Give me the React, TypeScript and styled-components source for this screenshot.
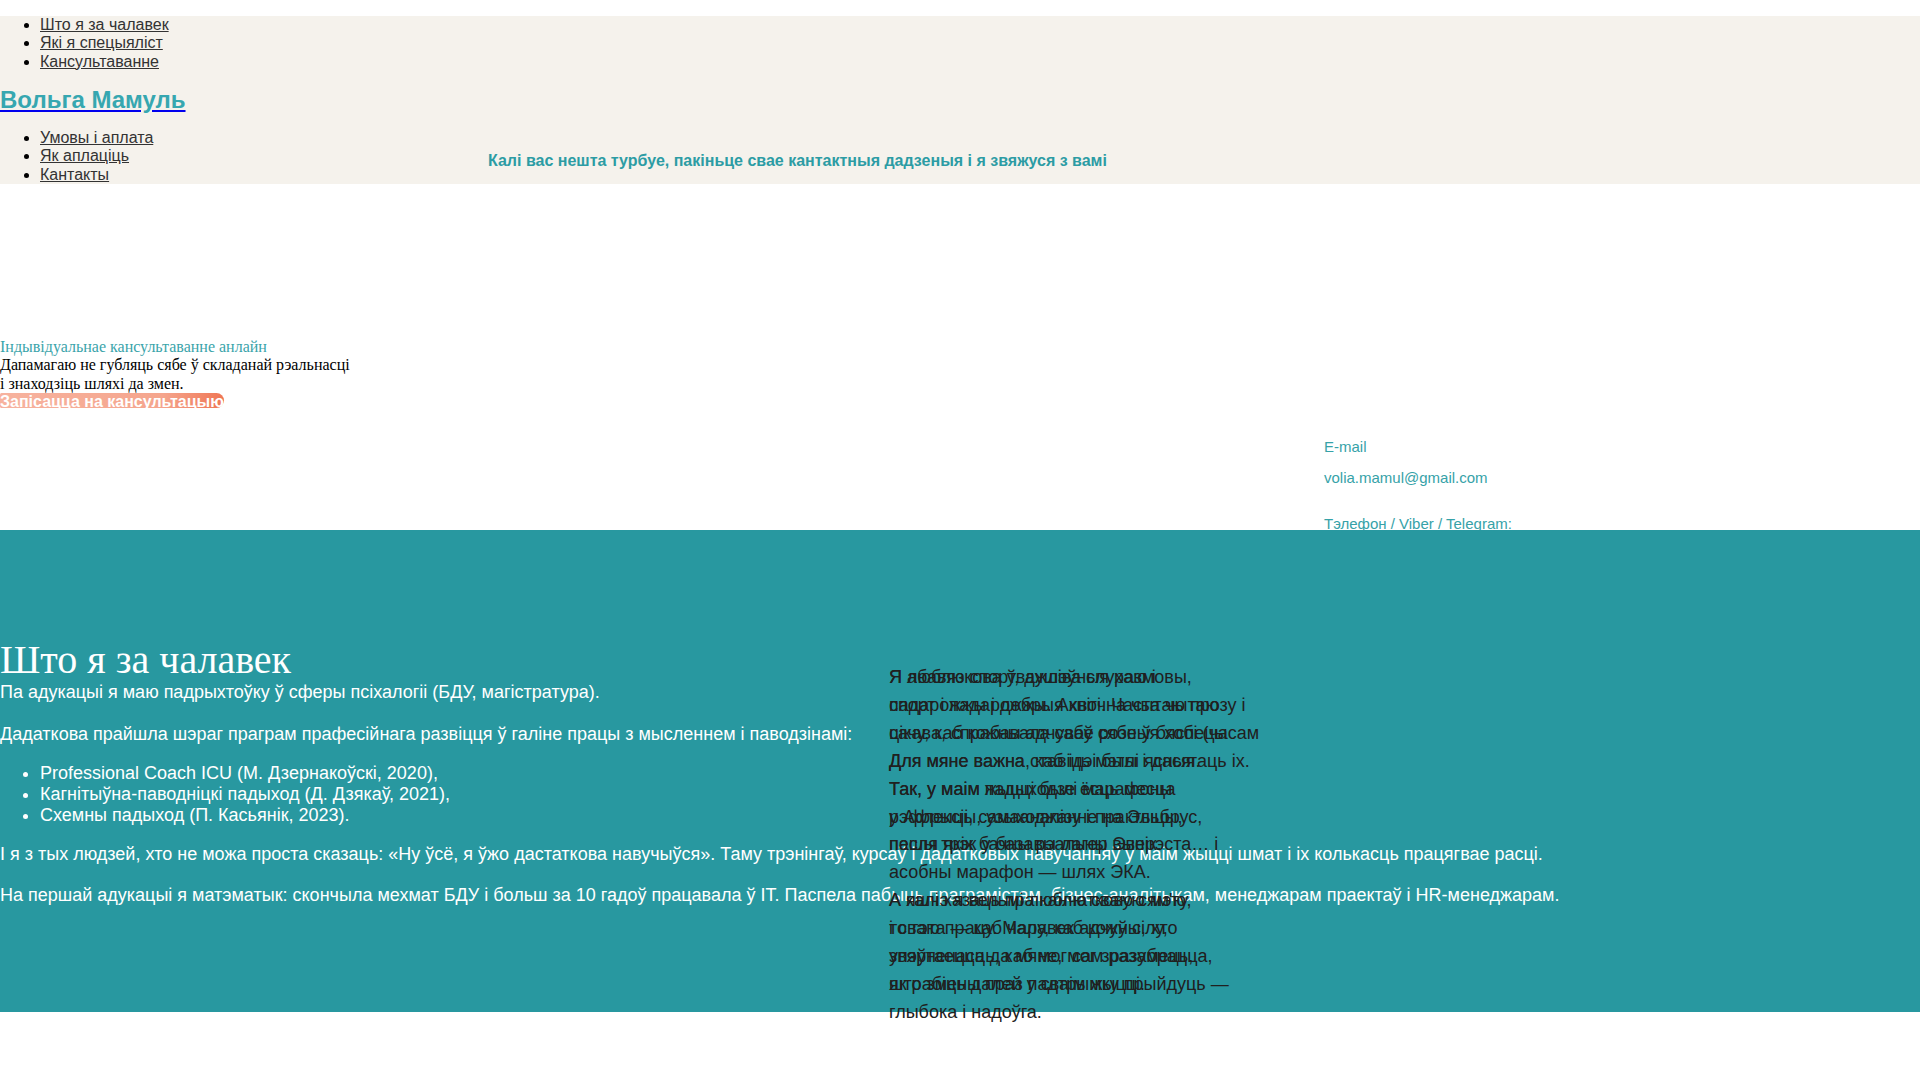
import React from "react";
import styled, { createGlobalStyle } from "styled-components";

const GlobalStyle = createGlobalStyle`
  html, body {
    margin: 0;
    padding: 0;
    background: #ffffff;
  }
  body {
    font-family: "Liberation Sans", Arial, sans-serif;
    font-size: 16px;
    color: #000;
  }
`;

const Header = styled.header`
  margin-top: 16px;
  background: #f5f2ec;
`;

const NavList = styled.ul<{ $top?: number; $bottom?: number }>`
  margin: ${(p) => p.$top ?? 0}px 0 ${(p) => p.$bottom ?? 0}px;
  padding: 0 0 0 40px;
  list-style: disc;
`;

const NavItem = styled.li`
  font-size: 16px;
  line-height: 18.4px;
`;

const NavLink = styled.a`
  color: #333333;
  text-decoration: underline;
`;

const SiteTitle = styled.h1`
  margin: 0;
  font-size: 24px;
  line-height: 27.6px;
  font-weight: 700;
`;

const TitleLink = styled.a`
  color: #36a7b0;
  text-decoration: underline;
  text-decoration-color: #0000ee;
`;

const HeaderRow = styled.div`
  display: flex;
`;

const SubNavWrap = styled.div`
  flex: 0 0 488px;
`;

const HeaderNote = styled.p`
  align-self: flex-end;
  margin: 0 0 14px;
  font-size: 16px;
  line-height: 18.4px;
  font-weight: 700;
  color: #2c9ca4;
`;

const Hero = styled.section`
  display: flex;
  height: 346px;
`;

const HeroMain = styled.div`
  flex: 0 0 1324px;
  padding-top: 154px;
  box-sizing: border-box;
  font-family: "Liberation Serif", "Times New Roman", serif;
  font-size: 16px;
  line-height: 18.4px;
`;

const Tagline = styled.div`
  color: #3aa4aa;
`;

const HeroText = styled.div`
  color: #000;
`;

const CtaButton = styled.a`
  display: inline-block;
  height: 15px;
  line-height: 17px;
  padding: 0;
  border-radius: 2px 10px 10px 2px;
  background: linear-gradient(100deg, #f7b39f 0%, #f5a58d 72%, #ef7452 100%);
  font-family: "Liberation Sans", Arial, sans-serif;
  font-weight: 700;
  font-size: 16px;
  color: #ffffff;
  text-decoration: underline;
  vertical-align: top;
`;

const Contacts = styled.div`
  padding-top: 254px;
  font-size: 15px;
  line-height: 17.25px;
  color: #36a2a8;
`;

const ContactLine = styled.p<{ $gap: number }>`
  margin: ${(p) => p.$gap}px 0 0;
`;

const About = styled.section`
  position: relative;
  background: #2898a0;
  padding: 109px 0 87px;
  color: #ffffff;
  font-size: 18px;
`;

const AboutTitle = styled.h2`
  margin: 0;
  font-family: "Liberation Serif", "Times New Roman", serif;
  font-weight: 400;
  font-size: 40px;
  line-height: 41px;
`;

const AboutText = styled.p`
  margin: 16px 0;
  line-height: 25.6px;
  &:first-of-type {
    margin-top: 0;
  }
`;

const AboutList = styled.ul`
  margin: 16px 0;
  padding-left: 40px;
`;

const AboutItem = styled.li`
  line-height: 20.8px;
`;

const Slides = styled.div`
  position: absolute;
  left: 889px;
  top: 134px;
  width: 360px;
  z-index: 1;
`;

const Slide = styled.p`
  position: absolute;
  top: 0;
  left: 0;
  margin: 0;
  white-space: nowrap;
  font-size: 18px;
  line-height: 27.9px;
  color: #202020;
`;

const NextSection = styled.section`
  height: 240px;
  background: #ffffff;
`;

const slideA = [
  "Я люблю спорт, душэўныя размовы,",
  "падарожжы і добрыя кнігі. Часта чытаю",
  "цікава, спрабавала сабе розныя хобі (часам",
  "Для мяне важна ставіць мэты і дасягаць іх.",
  "Так, у маім жыцці былі марафоны",
  "у Афрыцы, узыходжанне на Эльбрус,",
  "пешы трэк у базавы лагер Эверэста… і",
  "асобны марафон — шлях ЭКА.",
  "А яшчэ я вельмі люблю сваю сям'ю",
  "і сваю працу. Мару, каб кожны, хто",
  "звяртаецца да мяне, мог зразумець,",
  "што змены праз падтрымку прыйдуць —",
  "глыбока і надоўга.",
];

const slideB = [
  "Я абавязкова ўважліва слухаю і",
  "спорт і падарожжы. Ахвочна чытаю прозу і",
  "сачу, каб кожны адчуваў сябе ў бяспецы",
  "Для мяне важна, каб ідэі былі ясныя.",
  "Так, у маім падыходзе ёсць месца",
  "рэфлексіі, самааналізу і практыцы,",
  "пасля якіх бачны рэальны вынік.",
  "",
  "А калі казаць пра канчатковую мэту,",
  "то гэта — каб чалавек адчуў сілу,",
  "упэўненасць, каб мог сам разабрацца,",
  "як рабіць далей у сваім жыцці.",
];

const renderLines = (lines: string[]) =>
  lines.map((line, i) => (
    <React.Fragment key={i}>
      {line}
      {i < lines.length - 1 && <br />}
    </React.Fragment>
  ));

export default function App() {
  return (
    <>
      <GlobalStyle />
      <Header>
        <NavList $bottom={15}>
          <NavItem>
            <NavLink href="#about">Што я за чалавек</NavLink>
          </NavItem>
          <NavItem>
            <NavLink href="#specialist">Які я спецыяліст</NavLink>
          </NavItem>
          <NavItem>
            <NavLink href="#consult">Кансультаванне</NavLink>
          </NavItem>
        </NavList>
        <SiteTitle>
          <TitleLink href="#">Вольга Мамуль</TitleLink>
        </SiteTitle>
        <HeaderRow>
          <SubNavWrap>
            <NavList $top={15}>
              <NavItem>
                <NavLink href="#terms">Умовы і аплата</NavLink>
              </NavItem>
              <NavItem>
                <NavLink href="#pay">Як аплаціць</NavLink>
              </NavItem>
              <NavItem>
                <NavLink href="#contacts">Кантакты</NavLink>
              </NavItem>
            </NavList>
          </SubNavWrap>
          <HeaderNote>
            Калі вас нешта турбуе, пакіньце свае кантактныя дадзеныя і я звяжуся з вамі
          </HeaderNote>
        </HeaderRow>
      </Header>

      <Hero>
        <HeroMain>
          <Tagline>Індывідуальнае кансультаванне анлайн</Tagline>
          <HeroText>
            Дапамагаю не губляць сябе ў складанай рэальнасці
            <br />
            і знаходзіць шляхі да змен.
          </HeroText>
          <CtaButton href="#consult">Запісацца на кансультацыю</CtaButton>
        </HeroMain>
        <Contacts>
          <ContactLine $gap={0}>E-mail</ContactLine>
          <ContactLine $gap={14}>volia.mamul@gmail.com</ContactLine>
          <ContactLine $gap={28}>Тэлефон / Viber / Telegram:</ContactLine>
        </Contacts>
      </Hero>

      <About id="about">
        <AboutTitle>Што я за чалавек</AboutTitle>
        <AboutText>
          Па адукацыі я маю падрыхтоўку ў сферы псіхалогіі (БДУ, магістратура).
        </AboutText>
        <AboutText>
          Дадаткова прайшла шэраг праграм прафесійнага развіцця ў галіне працы з мысленнем і
          паводзінамі:
        </AboutText>
        <AboutList>
          <AboutItem>Professional Coach ICU (М. Дзернакоўскі, 2020),</AboutItem>
          <AboutItem>Кагнітыўна-паводніцкі падыход (Д. Дзякаў, 2021),</AboutItem>
          <AboutItem>Схемны падыход (П. Касьянік, 2023).</AboutItem>
        </AboutList>
        <AboutText>
          І я з тых людзей, хто не можа проста сказаць: «Ну ўсё, я ўжо дастаткова навучыўся».
          Таму трэнінгаў, курсаў і дадатковых навучанняў у маім жыцці шмат і іх колькасць
          працягвае расці.
        </AboutText>
        <AboutText>
          На першай адукацыі я матэматык: скончыла мехмат БДУ і больш за 10 гадоў працавала ў IT.
          Паспела пабыць праграмістам, бізнес-аналітыкам, менеджарам праектаў і HR-менеджарам.
        </AboutText>
        <Slides>
          <Slide>{renderLines(slideA)}</Slide>
          <Slide>{renderLines(slideB)}</Slide>
        </Slides>
      </About>
      <NextSection id="specialist" />
    </>
  );
}
